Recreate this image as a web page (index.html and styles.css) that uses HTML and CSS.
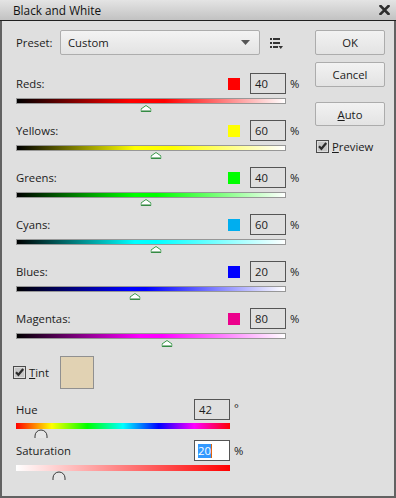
FILE: index.html
```html
<!DOCTYPE html>
<html lang="en">
<head>
    <meta charset="UTF-8">
    <meta name="viewport" content="width=device-width, initial-scale=1.0">
    <title>Black and White</title>
    <link rel="stylesheet" href="styles.css">
</head>
<body>
    <div class="dialog">
        <div class="titlebar">
            <span class="title">Black and White</span>
            <svg class="close" width="11" height="10" viewBox="0 0 11 10">
                <path d="M1.5 1 L9.5 9 M9.5 1 L1.5 9" stroke="#2e2e2e" stroke-width="2.6" stroke-linecap="square"/>
            </svg>
        </div>

        <div class="dialog-body">
            <div class="main-col">
                <div class="preset-row">
                    <span class="preset-label">Preset:</span>
                    <div class="select">
                        <span>Custom</span>
                        <svg width="9" height="5" viewBox="0 0 9 5"><path d="M0 0 H9 L4.5 5 Z" fill="#555"/></svg>
                    </div>
                    <svg class="preset-menu" width="13" height="11" viewBox="0 0 13 11">
                        <rect x="0" y="0" width="2" height="2" fill="#333"/>
                        <rect x="3" y="0" width="7" height="2" fill="#333"/>
                        <rect x="0" y="4" width="2" height="2" fill="#333"/>
                        <rect x="3" y="4" width="7" height="2" fill="#333"/>
                        <rect x="0" y="8" width="2" height="2" fill="#333"/>
                        <rect x="3" y="8" width="5" height="2" fill="#333"/>
                        <path d="M8.5 8 H13 L10.75 11 Z" fill="#333"/>
                    </svg>
                </div>

                <div class="channel">
                    <div class="field-row">
                        <span class="field-label">Reds:</span>
                        <span class="swatch swatch-reds"></span>
                        <div class="num-box">40</div>
                        <span class="unit">%</span>
                    </div>
                    <div class="track track-reds">
                        <svg class="thumb" style="left: 48%" width="11" height="7" viewBox="0 0 11 7"><path d="M0.5 6.5 V4 L5.5 0.5 L10.5 4 V6.5 Z" fill="#fff" stroke="#3d9a4c"/><path d="M1 6 H10" stroke="#2d7d3a"/></svg>
                    </div>
                </div>

                <div class="channel">
                    <div class="field-row">
                        <span class="field-label">Yellows:</span>
                        <span class="swatch swatch-yellows"></span>
                        <div class="num-box">60</div>
                        <span class="unit">%</span>
                    </div>
                    <div class="track track-yellows">
                        <svg class="thumb" style="left: 52%" width="11" height="7" viewBox="0 0 11 7"><path d="M0.5 6.5 V4 L5.5 0.5 L10.5 4 V6.5 Z" fill="#fff" stroke="#3d9a4c"/><path d="M1 6 H10" stroke="#2d7d3a"/></svg>
                    </div>
                </div>

                <div class="channel">
                    <div class="field-row">
                        <span class="field-label">Greens:</span>
                        <span class="swatch swatch-greens"></span>
                        <div class="num-box">40</div>
                        <span class="unit">%</span>
                    </div>
                    <div class="track track-greens">
                        <svg class="thumb" style="left: 48%" width="11" height="7" viewBox="0 0 11 7"><path d="M0.5 6.5 V4 L5.5 0.5 L10.5 4 V6.5 Z" fill="#fff" stroke="#3d9a4c"/><path d="M1 6 H10" stroke="#2d7d3a"/></svg>
                    </div>
                </div>

                <div class="channel">
                    <div class="field-row">
                        <span class="field-label">Cyans:</span>
                        <span class="swatch swatch-cyans"></span>
                        <div class="num-box">60</div>
                        <span class="unit">%</span>
                    </div>
                    <div class="track track-cyans">
                        <svg class="thumb" style="left: 52%" width="11" height="7" viewBox="0 0 11 7"><path d="M0.5 6.5 V4 L5.5 0.5 L10.5 4 V6.5 Z" fill="#fff" stroke="#3d9a4c"/><path d="M1 6 H10" stroke="#2d7d3a"/></svg>
                    </div>
                </div>

                <div class="channel">
                    <div class="field-row">
                        <span class="field-label">Blues:</span>
                        <span class="swatch swatch-blues"></span>
                        <div class="num-box">20</div>
                        <span class="unit">%</span>
                    </div>
                    <div class="track track-blues">
                        <svg class="thumb" style="left: 44%" width="11" height="7" viewBox="0 0 11 7"><path d="M0.5 6.5 V4 L5.5 0.5 L10.5 4 V6.5 Z" fill="#fff" stroke="#3d9a4c"/><path d="M1 6 H10" stroke="#2d7d3a"/></svg>
                    </div>
                </div>

                <div class="channel">
                    <div class="field-row">
                        <span class="field-label">Magentas:</span>
                        <span class="swatch swatch-magentas"></span>
                        <div class="num-box">80</div>
                        <span class="unit">%</span>
                    </div>
                    <div class="track track-magentas">
                        <svg class="thumb" style="left: 56%" width="11" height="7" viewBox="0 0 11 7"><path d="M0.5 6.5 V4 L5.5 0.5 L10.5 4 V6.5 Z" fill="#fff" stroke="#3d9a4c"/><path d="M1 6 H10" stroke="#2d7d3a"/></svg>
                    </div>
                </div>

                <div class="tint-row">
                    <label class="check">
                        <svg width="13" height="13" viewBox="0 0 13 13"><rect x="0.5" y="0.5" width="12" height="12" fill="#c6c6c6" stroke="#4a4a4a"/><rect x="1.5" y="1.5" width="10" height="10" fill="none" stroke="#dedede"/><path d="M3 6.3 L5.4 8.8 L10.2 3" fill="none" stroke="#2b2b2b" stroke-width="2.2"/></svg>
                        <span><u>T</u>int</span>
                    </label>
                    <div class="tint-swatch"></div>
                </div>

                <div class="hue-block">
                    <div class="field-row short">
                        <span class="field-label">Hue</span>
                        <div class="num-box">42</div>
                        <span class="unit deg">°</span>
                    </div>
                    <div class="track short track-hue">
                        <svg class="knob" style="left: 11.7%" width="14" height="9" viewBox="0 0 14 9"><path d="M1 9 V7 A6 6 0 0 1 13 7 V9" fill="#e6e6e6" stroke="#3a3a3a"/></svg>
                    </div>
                </div>

                <div class="sat-block">
                    <div class="field-row short">
                        <span class="field-label">Saturation</span>
                        <div class="num-box active"><span class="selected">20</span><span class="caret"></span></div>
                        <span class="unit">%</span>
                    </div>
                    <div class="track short track-sat">
                        <svg class="knob" style="left: 20%" width="14" height="9" viewBox="0 0 14 9"><path d="M1 9 V7 A6 6 0 0 1 13 7 V9" fill="#e6e6e6" stroke="#3a3a3a"/></svg>
                    </div>
                </div>
            </div>

            <div class="side-col">
                <button class="btn">OK</button>
                <button class="btn btn-cancel">Cancel</button>
                <button class="btn btn-auto"><u>A</u>uto</button>
                <label class="check check-preview">
                    <svg width="13" height="13" viewBox="0 0 13 13"><rect x="0.5" y="0.5" width="12" height="12" fill="#c6c6c6" stroke="#4a4a4a"/><rect x="1.5" y="1.5" width="10" height="10" fill="none" stroke="#dedede"/><path d="M3 6.3 L5.4 8.8 L10.2 3" fill="none" stroke="#2b2b2b" stroke-width="2.2"/></svg>
                    <span><u>P</u>review</span>
                </label>
            </div>
        </div>
    </div>
</body>
</html>
```

FILE: styles.css
```css
:root {
    --panel-bg: #dfdfdf;
    --text-color: #1b1b1b;
    --frame-color: #626262;
    --box-border: #555555;
}

* {
    box-sizing: border-box;
}

body {
    margin: 0;
    padding: 0;
    font-family: "Open Sans", "Noto Sans", sans-serif;
    font-size: 11.3px;
    color: var(--text-color);
    background: var(--panel-bg);
}

.dialog {
    width: 396px;
    height: 498px;
    display: flex;
    flex-direction: column;
}

.titlebar {
    height: 21px;
    display: flex;
    align-items: center;
    justify-content: space-between;
    padding: 0 6px 0 13px;
    background: linear-gradient(#e4e4e4, #c2c2c2);
    border-bottom: 1px solid #202020;
}

.title {
    font-size: 11.8px;
    color: #111;
}

.dialog-body {
    flex: 1;
    display: flex;
    background: var(--panel-bg);
    border: 2px solid var(--frame-color);
    border-top: none;
}

.main-col {
    padding: 9px 0 0 14px;
}

/* preset */

.preset-row {
    display: flex;
    align-items: center;
    height: 25px;
}

.preset-label {
    width: 44px;
}

.select {
    width: 200px;
    height: 25px;
    display: flex;
    align-items: center;
    justify-content: space-between;
    padding: 0 9px 0 7px;
    border: 1px solid #adadad;
    border-radius: 2px;
    background: linear-gradient(#f3f3f3, #e3e3e3);
}

.preset-menu {
    margin-left: 10px;
    margin-top: 2px;
}

/* channel sliders */

.channel {
    height: 47px;
}

.preset-row + .channel {
    margin-top: 18px;
}

.field-row {
    display: flex;
    align-items: center;
    height: 21px;
    width: 288px;
}

.field-row.short {
    width: 232px;
}

.field-label {
    flex: 1;
}

.swatch {
    width: 12px;
    height: 12px;
    margin-right: 10px;
}

.swatch-reds { background: #ff0000; }
.swatch-yellows { background: #ffff00; }
.swatch-greens { background: #00ff00; }
.swatch-cyans { background: #00aeef; }
.swatch-blues { background: #0000ff; }
.swatch-magentas { background: #ec008c; }

.num-box {
    width: 36px;
    height: 21px;
    display: flex;
    align-items: center;
    padding-left: 4px;
    border: 1px solid var(--box-border);
}

.num-box.active {
    background: #fff;
    padding-left: 3px;
}

.selected {
    background: #3399ff;
    color: #fff;
    line-height: 14px;
}

.caret {
    width: 1px;
    height: 14px;
    background: #e0660f;
}

.unit {
    width: 14px;
    margin-left: 4px;
}

.unit.deg {
    align-self: flex-start;
    margin-top: 1px;
}

.track {
    position: relative;
    width: 270px;
    height: 6px;
    margin-top: 4px;
    border: 1px solid #979797;
}

.track.short {
    width: 214px;
    border: none;
}

.thumb {
    position: absolute;
    top: 6px;
    transform: translateX(-50%);
}

.knob {
    position: absolute;
    top: 6px;
    transform: translateX(-50%);
}

.track-reds { background: linear-gradient(to right, #000, #ff0000 42%, #ff0000 55%, #fff); }
.track-yellows { background: linear-gradient(to right, #000, #ffff00 44%, #ffff00 58%, #fff); }
.track-greens { background: linear-gradient(to right, #000, #00ff00 44%, #00ff00 52%, #fff); }
.track-cyans { background: linear-gradient(to right, #000, #00ffff 44%, #00ffff 52%, #fff); }
.track-blues { background: linear-gradient(to right, #000, #0000ff 42%, #0000ff 48%, #fff); }
.track-magentas { background: linear-gradient(to right, #000, #ff00ff 46%, #ff00ff 54%, #fff); }

.track-hue {
    margin-top: 3px;
    background: linear-gradient(to right, #ff0000, #ffff00 16.7%, #00ff00 33.3%, #00ffff 50%, #0000ff 66.7%, #ff00ff 83.3%, #ff0000);
}

.track-sat {
    background: linear-gradient(to right, #fff, #ff0000);
}

/* tint */

.tint-row {
    display: flex;
    align-items: center;
    margin: 1px 0 0 -3px;
}

.check {
    display: flex;
    align-items: center;
    gap: 3px;
    height: 13px;
    line-height: 13px;
}

.tint-row .check {
    width: 47px;
}

.tint-swatch {
    width: 34px;
    height: 33px;
    background: #e1d2b3;
    border: 1px solid #909090;
}

.hue-block {
    margin-top: 10px;
}

.sat-block {
    margin-top: 11px;
}

/* buttons */

.side-col {
    width: 70px;
    margin-left: auto;
    margin-right: 9px;
    padding-top: 9px;
    display: flex;
    flex-direction: column;
}

.btn {
    height: 25px;
    font-family: inherit;
    font-size: inherit;
    color: var(--text-color);
    border: 1px solid #acacac;
    border-radius: 2px;
    background: linear-gradient(#f2f2f2, #e3e3e3);
    padding: 0;
}

.btn-cancel {
    margin-top: 7px;
}

.btn-auto {
    height: 24px;
    margin-top: 15px;
}

.check-preview {
    margin-top: 14px;
    margin-left: 1px;
}
```
